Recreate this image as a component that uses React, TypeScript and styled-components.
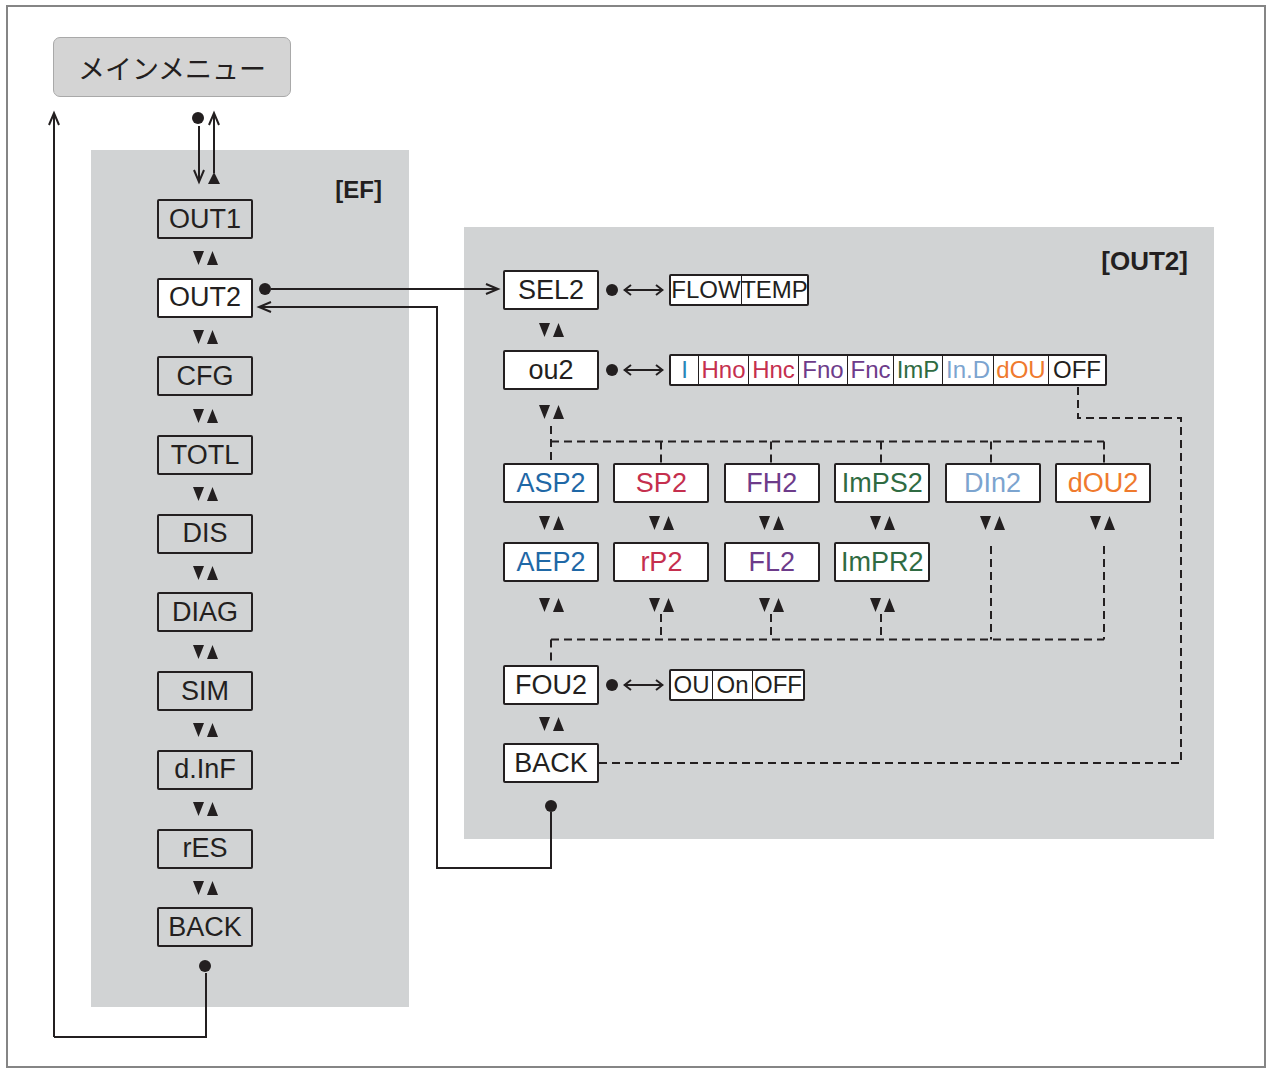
import React from "react";
import styled, { createGlobalStyle } from "styled-components";

const INK = "#231f20";
const PANEL = "#d1d3d4";
const NARROW = `"Liberation Sans Narrow", "Liberation Sans", Arial, sans-serif`;

// inner origin of the frame, in page pixels
const OX = 8;
const OY = 7;

const C = {
  blue: "#1f68a6",
  teal: "#2a86b8",
  red: "#c52f4e",
  purple: "#6d3b8a",
  green: "#2f6b42",
  sky: "#7ca4cf",
  orange: "#ef7a2d",
};

const GlobalStyle = createGlobalStyle`
  html, body { margin: 0; padding: 0; background: #fff; }
  body { font-family: "Liberation Sans", Arial, sans-serif; color: ${INK}; }
`;

const Frame = styled.div`
  position: relative;
  box-sizing: border-box;
  margin: 5px 0 0 6px;
  width: 1260px;
  height: 1063px;
  border: 2px solid #858585;
  overflow: hidden;
`;

const MenuBox = styled.div`
  position: absolute;
  left: ${53 - OX}px;
  top: ${37 - OY}px;
  width: 238px;
  height: 60px;
  box-sizing: border-box;
  border: 1.5px solid #a9a9a9;
  border-radius: 7px;
  background: #d4d4d4;
  display: flex;
  align-items: center;
  justify-content: center;
  font: 27px "Noto Sans CJK JP", sans-serif;
  color: ${INK};
`;

const Panel = styled.section<{ $x: number; $y: number; $w: number; $h: number }>`
  position: absolute;
  left: ${(p) => p.$x - OX}px;
  top: ${(p) => p.$y - OY}px;
  width: ${(p) => p.$w}px;
  height: ${(p) => p.$h}px;
  background: ${PANEL};
`;

const PanelLabel = styled.div<{ $size: number; $top: number; $right: number }>`
  position: absolute;
  top: ${(p) => p.$top}px;
  right: ${(p) => p.$right}px;
  font: bold ${(p) => p.$size}px/1 "Liberation Sans", Arial, sans-serif;
  color: ${INK};
`;

const EFColumn = styled.div`
  display: flex;
  flex-direction: column;
  align-items: center;
  width: 96px;
  margin-left: 66px;
  padding-top: 49px;
`;

const OutColumn = styled.div`
  display: flex;
  flex-direction: column;
  align-items: flex-start;
  margin-left: 39px;
  padding-top: 43px;
`;

const Box = styled.div<{ $fill?: boolean; $color?: string }>`
  box-sizing: border-box;
  width: 96px;
  height: 40px;
  flex-shrink: 0;
  border: 2.5px solid ${INK};
  border-radius: 2px;
  background: ${(p) => (p.$fill ? "#fff" : "transparent")};
  color: ${(p) => p.$color ?? INK};
  display: flex;
  align-items: center;
  justify-content: center;
  font: 27px/1 ${NARROW};
`;

const ArrowSlot = styled.div<{ $h: number; $top?: number }>`
  width: 96px;
  height: ${(p) => p.$h}px;
  display: flex;
  justify-content: center;
  align-items: ${(p) => (p.$top === undefined ? "center" : "flex-start")};
  padding-top: ${(p) => p.$top ?? 0}px;
  box-sizing: border-box;
`;

const Row = styled.div`
  display: flex;
  align-items: center;
  height: 40px;
`;

const Dot = styled.span<{ $ml?: number; $mt?: number }>`
  display: block;
  width: 12px;
  height: 12px;
  border-radius: 50%;
  background: ${INK};
  margin-left: ${(p) => p.$ml ?? 0}px;
  margin-top: ${(p) => p.$mt ?? 0}px;
  flex-shrink: 0;
`;

const DotSlot = styled.div<{ $mt: number }>`
  width: 96px;
  display: flex;
  justify-content: center;
  margin-top: ${(p) => p.$mt}px;
`;

const Options = styled.div`
  display: flex;
  height: 32px;
  box-sizing: border-box;
  margin-left: 5px;
  border: 2px solid ${INK};
  border-radius: 2px;
  background: #fff;
`;

const Cell = styled.span<{ $w: number; $color?: string }>`
  width: ${(p) => p.$w}px;
  box-sizing: border-box;
  display: flex;
  align-items: center;
  justify-content: center;
  font: 24px/1 ${NARROW};
  color: ${(p) => p.$color ?? INK};
  & + & {
    border-left: 1.5px solid ${INK};
  }
`;

const Grid = styled.div`
  display: grid;
  grid-template-columns: repeat(6, 96px);
  grid-template-rows: 40px 39px 40px 46px;
  column-gap: 14.4px;
`;

const Spacer = styled.div<{ $h: number }>`
  height: ${(p) => p.$h}px;
`;

const Overlay = styled.svg`
  position: absolute;
  left: 0;
  top: 0;
  pointer-events: none;
`;

const UpDown = () => (
  <svg width="25" height="14" viewBox="0 0 25 14">
    <path d="M0 0H11L5.5 14Z M14 14H25L19.5 0Z" fill={INK} />
  </svg>
);

const BothWays = () => (
  <svg width="41" height="12" viewBox="0 0 41 12" style={{ marginLeft: 5 }}>
    <path
      d="M1 6H40 M8 1L1.5 6L8 11 M33 1L39.5 6L33 11"
      stroke={INK}
      strokeWidth={2}
      fill="none"
    />
  </svg>
);

type Opt = { label: string; w: number; color?: string };

const OptionRow = ({ name, opts }: { name: string; opts: Opt[] }) => (
  <Row>
    <Box $fill>{name}</Box>
    <Dot $ml={7} />
    <BothWays />
    <Options>
      {opts.map((o) => (
        <Cell key={o.label} $w={o.w} $color={o.color}>
          {o.label}
        </Cell>
      ))}
    </Options>
  </Row>
);

const efItems = ["OUT1", "OUT2", "CFG", "TOTL", "DIS", "DIAG", "SIM", "d.InF", "rES", "BACK"];

const selOpts: Opt[] = [
  { label: "FLOW", w: 70 },
  { label: "TEMP", w: 66 },
];

const ouOpts: Opt[] = [
  { label: "I", w: 27, color: C.teal },
  { label: "Hno", w: 50, color: C.red },
  { label: "Hnc", w: 50, color: C.red },
  { label: "Fno", w: 49, color: C.purple },
  { label: "Fnc", w: 46, color: C.purple },
  { label: "ImP", w: 49, color: C.green },
  { label: "In.D", w: 51, color: C.sky },
  { label: "dOU", w: 55, color: C.orange },
  { label: "OFF", w: 57 },
];

const fouOpts: Opt[] = [
  { label: "OU", w: 41 },
  { label: "On", w: 40 },
  { label: "OFF", w: 51 },
];

const gridTop = [
  { label: "ASP2", color: C.blue },
  { label: "SP2", color: C.red },
  { label: "FH2", color: C.purple },
  { label: "ImPS2", color: C.green },
  { label: "DIn2", color: C.sky },
  { label: "dOU2", color: C.orange },
];

const gridBottom = [
  { label: "AEP2", color: C.blue },
  { label: "rP2", color: C.red },
  { label: "FL2", color: C.purple },
  { label: "ImPR2", color: C.green },
];

// arrowheads (open) in page coordinates
const up = (x: number, y: number) => `M${x - 5} ${y + 12}L${x} ${y}L${x + 5} ${y + 12}`;
const down = (x: number, y: number) => `M${x - 5} ${y - 12}L${x} ${y}L${x + 5} ${y - 12}`;
const right = (x: number, y: number) => `M${x - 12} ${y - 5}L${x} ${y}L${x - 12} ${y + 5}`;
const left = (x: number, y: number) => `M${x + 12} ${y - 5}L${x} ${y}L${x + 12} ${y + 5}`;

const cols = [551, 661, 771, 881, 991, 1104];

const Connectors = () => {
  const solid = [
    "M54 1037V114",
    up(54, 113),
    "M54 1037H206V973",
    "M199 126V181",
    down(199, 182),
    "M214 173V114",
    up(214, 113),
    "M271 289H497",
    right(498, 289),
    "M259 307H437V868H551V812",
    left(259, 307),
  ].join(" ");

  const dashed = [
    "M551 426V463",
    "M551 441.5H1104",
    ...cols.slice(1).map((x) => `M${x} 441.5V463`),
    ...cols.slice(1, 4).map((x) => `M${x} 614V639.5`),
    "M991 546V639.5",
    "M1104 546V639.5",
    "M551 639.5H1104",
    "M551 639.5V665",
    "M599 763H1181V418H1078V386",
  ].join(" ");

  return (
    <Overlay width={1256} height={1059} viewBox={`${OX} ${OY} 1256 1059`}>
      <path d={solid} stroke={INK} strokeWidth={2} fill="none" />
      <path d={dashed} stroke={INK} strokeWidth={2} fill="none" strokeDasharray="8 5" />
      <path d="M208 184L214 172L220 184Z" fill={INK} />
      <circle cx={198} cy={118} r={6} fill={INK} />
      <circle cx={265} cy={289} r={6} fill={INK} />
    </Overlay>
  );
};

const App = () => {
  return (
    <>
      <GlobalStyle />
      <Frame>
        <MenuBox>メインメニュー</MenuBox>

        <Panel $x={91} $y={150} $w={318} $h={857}>
          <PanelLabel $size={24} $top={28} $right={27}>
            [EF]
          </PanelLabel>
          <EFColumn>
            {efItems.map((name, i) => (
              <React.Fragment key={name}>
                {i > 0 && (
                  <ArrowSlot $h={38.7}>
                    <UpDown />
                  </ArrowSlot>
                )}
                <Box $fill={name === "OUT2"}>{name}</Box>
              </React.Fragment>
            ))}
            <DotSlot $mt={13}>
              <Dot />
            </DotSlot>
          </EFColumn>
        </Panel>

        <Panel $x={464} $y={227} $w={750} $h={612}>
          <PanelLabel $size={26} $top={21} $right={26}>
            [OUT2]
          </PanelLabel>
          <OutColumn>
            <OptionRow name="SEL2" opts={selOpts} />
            <ArrowSlot $h={40}>
              <UpDown />
            </ArrowSlot>
            <OptionRow name="ou2" opts={ouOpts} />
            <ArrowSlot $h={73} $top={15}>
              <UpDown />
            </ArrowSlot>
            <Grid>
              {gridTop.map((b) => (
                <Box key={b.label} $fill $color={b.color}>
                  {b.label}
                </Box>
              ))}
              {gridTop.map((b) => (
                <ArrowSlot key={`a-${b.label}`} $h={39}>
                  <UpDown />
                </ArrowSlot>
              ))}
              {gridBottom.map((b) => (
                <Box key={b.label} $fill $color={b.color}>
                  {b.label}
                </Box>
              ))}
              <span />
              <span />
              {gridBottom.map((b) => (
                <ArrowSlot key={`b-${b.label}`} $h={46}>
                  <UpDown />
                </ArrowSlot>
              ))}
            </Grid>
            <Spacer $h={37} />
            <OptionRow name="FOU2" opts={fouOpts} />
            <ArrowSlot $h={38}>
              <UpDown />
            </ArrowSlot>
            <Box $fill>BACK</Box>
            <DotSlot $mt={17}>
              <Dot />
            </DotSlot>
          </OutColumn>
        </Panel>

        <Connectors />
      </Frame>
    </>
  );
};

export default App;
